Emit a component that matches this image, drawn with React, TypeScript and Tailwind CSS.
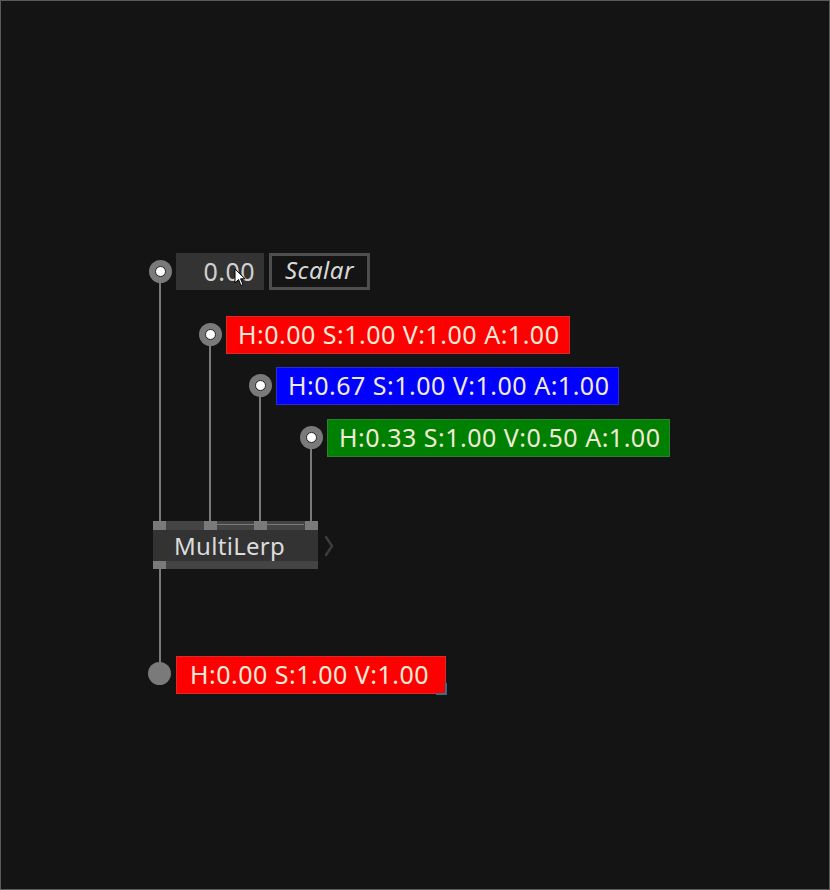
const font = { fontFamily: '"Noto Sans", "Open Sans", sans-serif' };

type ColorPin = { cx: number; cy: number; label: string; bg: string; w: number };

const colorPins: ColorPin[] = [
  { cx: 210, cy: 334, label: "H:0.00 S:1.00 V:1.00 A:1.00", bg: "bg-[#ff0000]", w: 344 },
  { cx: 260, cy: 385, label: "H:0.67 S:1.00 V:1.00 A:1.00", bg: "bg-[#0000ff]", w: 343 },
  { cx: 311, cy: 437, label: "H:0.33 S:1.00 V:0.50 A:1.00", bg: "bg-[#008000]", w: 343 },
];

function InPin({ cx, cy }: { cx: number; cy: number }) {
  return (
    <div
      className="absolute flex h-[23px] w-[23px] items-center justify-center rounded-full bg-[#7a7a7a]"
      style={{ left: cx - 11.5, top: cy - 11.5 }}
    >
      <div className="h-[11px] w-[11px] rounded-full border-[1.5px] border-[#222] bg-white" />
    </div>
  );
}

function Wire({ x, y1, y2 }: { x: number; y1: number; y2: number }) {
  return <div className="absolute w-[2px] bg-[#7a7a7a]" style={{ left: x - 1, top: y1, height: y2 - y1 }} />;
}

export default function App() {
  return (
    <div
      className="relative h-[890px] w-[830px] overflow-hidden bg-[#141414] shadow-[inset_0_0_0_1px_#5a5a5a]"
      style={font}
    >
      {/* wires */}
      <Wire x={160} y1={280} y2={522} />
      {colorPins.map((p) => (
        <Wire key={p.cx} x={p.cx} y1={p.cy + 8} y2={522} />
      ))}
      <Wire x={160} y1={569} y2={666} />

      {/* scalar input */}
      <InPin cx={160} cy={271} />
      <div className="absolute left-[176px] top-[253px] flex h-[37px] w-[88px] items-center justify-end bg-[#333333] pr-[9px] text-[25px] tracking-[0.5px] text-[#d0d0d0]">
        0.00
      </div>
      <div className="absolute left-[269px] top-[253px] flex h-[37px] w-[101px] items-center justify-center border-[3px] border-[#4e4e4e] bg-[#141414] pb-[3px] text-[24px] italic tracking-[0.5px] text-[#d8d8d8]">
        Scalar
      </div>
      <svg className="absolute left-[234px] top-[268px]" width="12" height="19" viewBox="0 0 12 19">
        <path d="M1 1 L1 15 L4.5 11.5 L7 17.5 L9 16.6 L6.6 10.8 L11 10.8 Z" fill="white" stroke="black" strokeWidth="1" strokeLinejoin="round" />
      </svg>

      {/* color inputs */}
      {colorPins.map((p) => (
        <div key={p.label}>
          <InPin cx={p.cx} cy={p.cy} />
          <div
            className={`absolute flex h-[38px] items-center border border-[rgba(128,128,128,0.35)] pl-[11px] text-[25px] tracking-[0.5px] text-[#f2ead8] ${p.bg}`}
            style={{ left: p.cx + 16, top: p.cy - 18, width: p.w }}
          >
            {p.label}
          </div>
        </div>
      ))}

      {/* MultiLerp node */}
      <div className="absolute left-[153px] top-[521px] flex w-[165px] flex-col">
        <div className="relative h-[9px] bg-[#444444]">
          <div className="absolute left-[63px] top-[3px] h-[1px] w-[88px] bg-[#7a7a7a]" />
          <div className="absolute left-0 top-0 h-[9px] w-[13px] bg-[#7a7a7a]" />
          <div className="absolute left-[51px] top-0 h-[9px] w-[13px] bg-[#7a7a7a]" />
          <div className="absolute left-[101px] top-0 h-[9px] w-[13px] bg-[#7a7a7a]" />
          <div className="absolute left-[152px] top-0 h-[9px] w-[13px] bg-[#7a7a7a]" />
        </div>
        <div className="flex h-[31px] items-center bg-[#333333] pl-[21px] text-[24px] tracking-[0.3px] text-[#dcdcdc]">
          MultiLerp
        </div>
        <div className="relative h-[8px] bg-[#444444]">
          <div className="absolute left-0 top-0 h-[8px] w-[13px] bg-[#7a7a7a]" />
        </div>
      </div>
      <svg className="absolute left-[322px] top-[534px]" width="14" height="24" viewBox="0 0 14 24">
        <path d="M4 3 L10 12 L4 21" fill="none" stroke="#3c3c3c" strokeWidth="2.5" strokeLinecap="round" />
      </svg>

      {/* output */}
      <div className="absolute left-[148px] top-[662px] h-[23px] w-[23px] rounded-full bg-[#7a7a7a]" />
      <div className="absolute left-[176px] top-[656px] flex h-[38px] w-[270px] items-center border border-[rgba(128,128,128,0.35)] bg-[#ff0000] pl-[13px] text-[25px] tracking-[0.5px] text-[#f2ead8]">
        H:0.00 S:1.00 V:1.00
      </div>
      <div className="absolute left-[436px] top-[683px] h-[12px] w-[11px] border-b-2 border-r-2 border-[#3a6a8a]" />
    </div>
  );
}
